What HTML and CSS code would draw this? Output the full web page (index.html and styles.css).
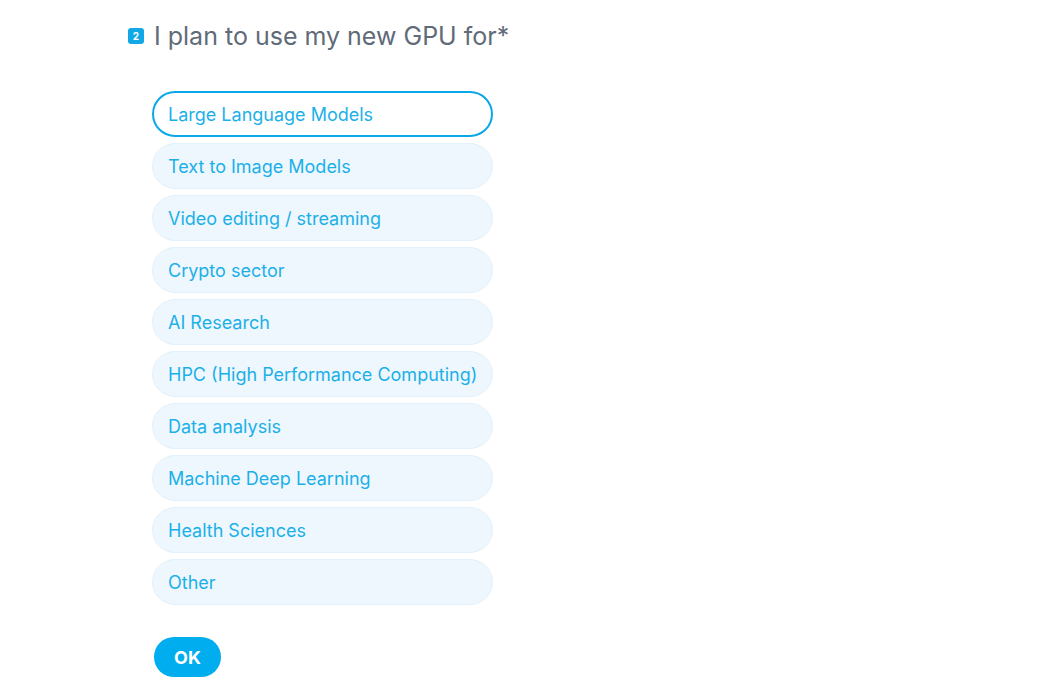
FILE: index.html
```html
<!DOCTYPE html>
<html>
<head>
<meta charset="utf-8">
<link rel="stylesheet" href="styles.css">
</head>
<body>
<main class="question">
  <h1 class="title"><span class="badge">2</span><span class="title-text">I plan to use my new GPU for*</span></h1>
  <ul class="options">
    <li class="option selected">Large Language Models</li>
    <li class="option">Text to Image Models</li>
    <li class="option">Video editing / streaming</li>
    <li class="option">Crypto sector</li>
    <li class="option">AI Research</li>
    <li class="option">HPC (High Performance Computing)</li>
    <li class="option">Data analysis</li>
    <li class="option">Machine Deep Learning</li>
    <li class="option">Health Sciences</li>
    <li class="option">Other</li>
  </ul>
  <button class="ok">OK</button>
</main>
</body>
</html>
```
FILE: styles.css
```css
* { box-sizing: border-box; }
html, body { margin: 0; padding: 0; background: #fff; }
body { font-family: Inter, "Noto Sans", sans-serif; }
.question {
  padding: 20px 0 0 128px;
  display: flex;
  flex-direction: column;
  align-items: flex-start;
}
.title {
  margin: 0;
  display: flex;
  align-items: center;
  gap: 10px;
  font-size: 25px;
  font-weight: 400;
  color: #5f6b78;
  line-height: 32px;
}
.badge {
  width: 16px;
  height: 16px;
  border-radius: 3px;
  background: #12a8e6;
  color: #fff;
  font-size: 10px;
  font-weight: 700;
  display: flex;
  align-items: center;
  justify-content: center;
  line-height: 1;
}
.options {
  list-style: none;
  margin: 39px 0 0 24px;
  padding: 0;
  display: flex;
  flex-direction: column;
  gap: 6px;
  width: 341px;
}
.option {
  height: 46px;
  border-radius: 23px;
  background: #eef7fd;
  border: 1px solid #e2f1fb;
  color: #1cb0e8;
  font-size: 18px;
  display: flex;
  align-items: center;
  padding-left: 15px;
}
.option.selected {
  background: #fff;
  border: 2px solid #0aa8e8;
  padding-left: 14px;
}
.ok {
  margin: 32px 0 0 26px;
  width: 67px;
  height: 40px;
  border: none;
  border-radius: 20px;
  background: #00adee;
  color: #fff;
  font-family: Inter, "Noto Sans", sans-serif;
  font-size: 18px;
  font-weight: 700;
  padding: 0;
}
```
